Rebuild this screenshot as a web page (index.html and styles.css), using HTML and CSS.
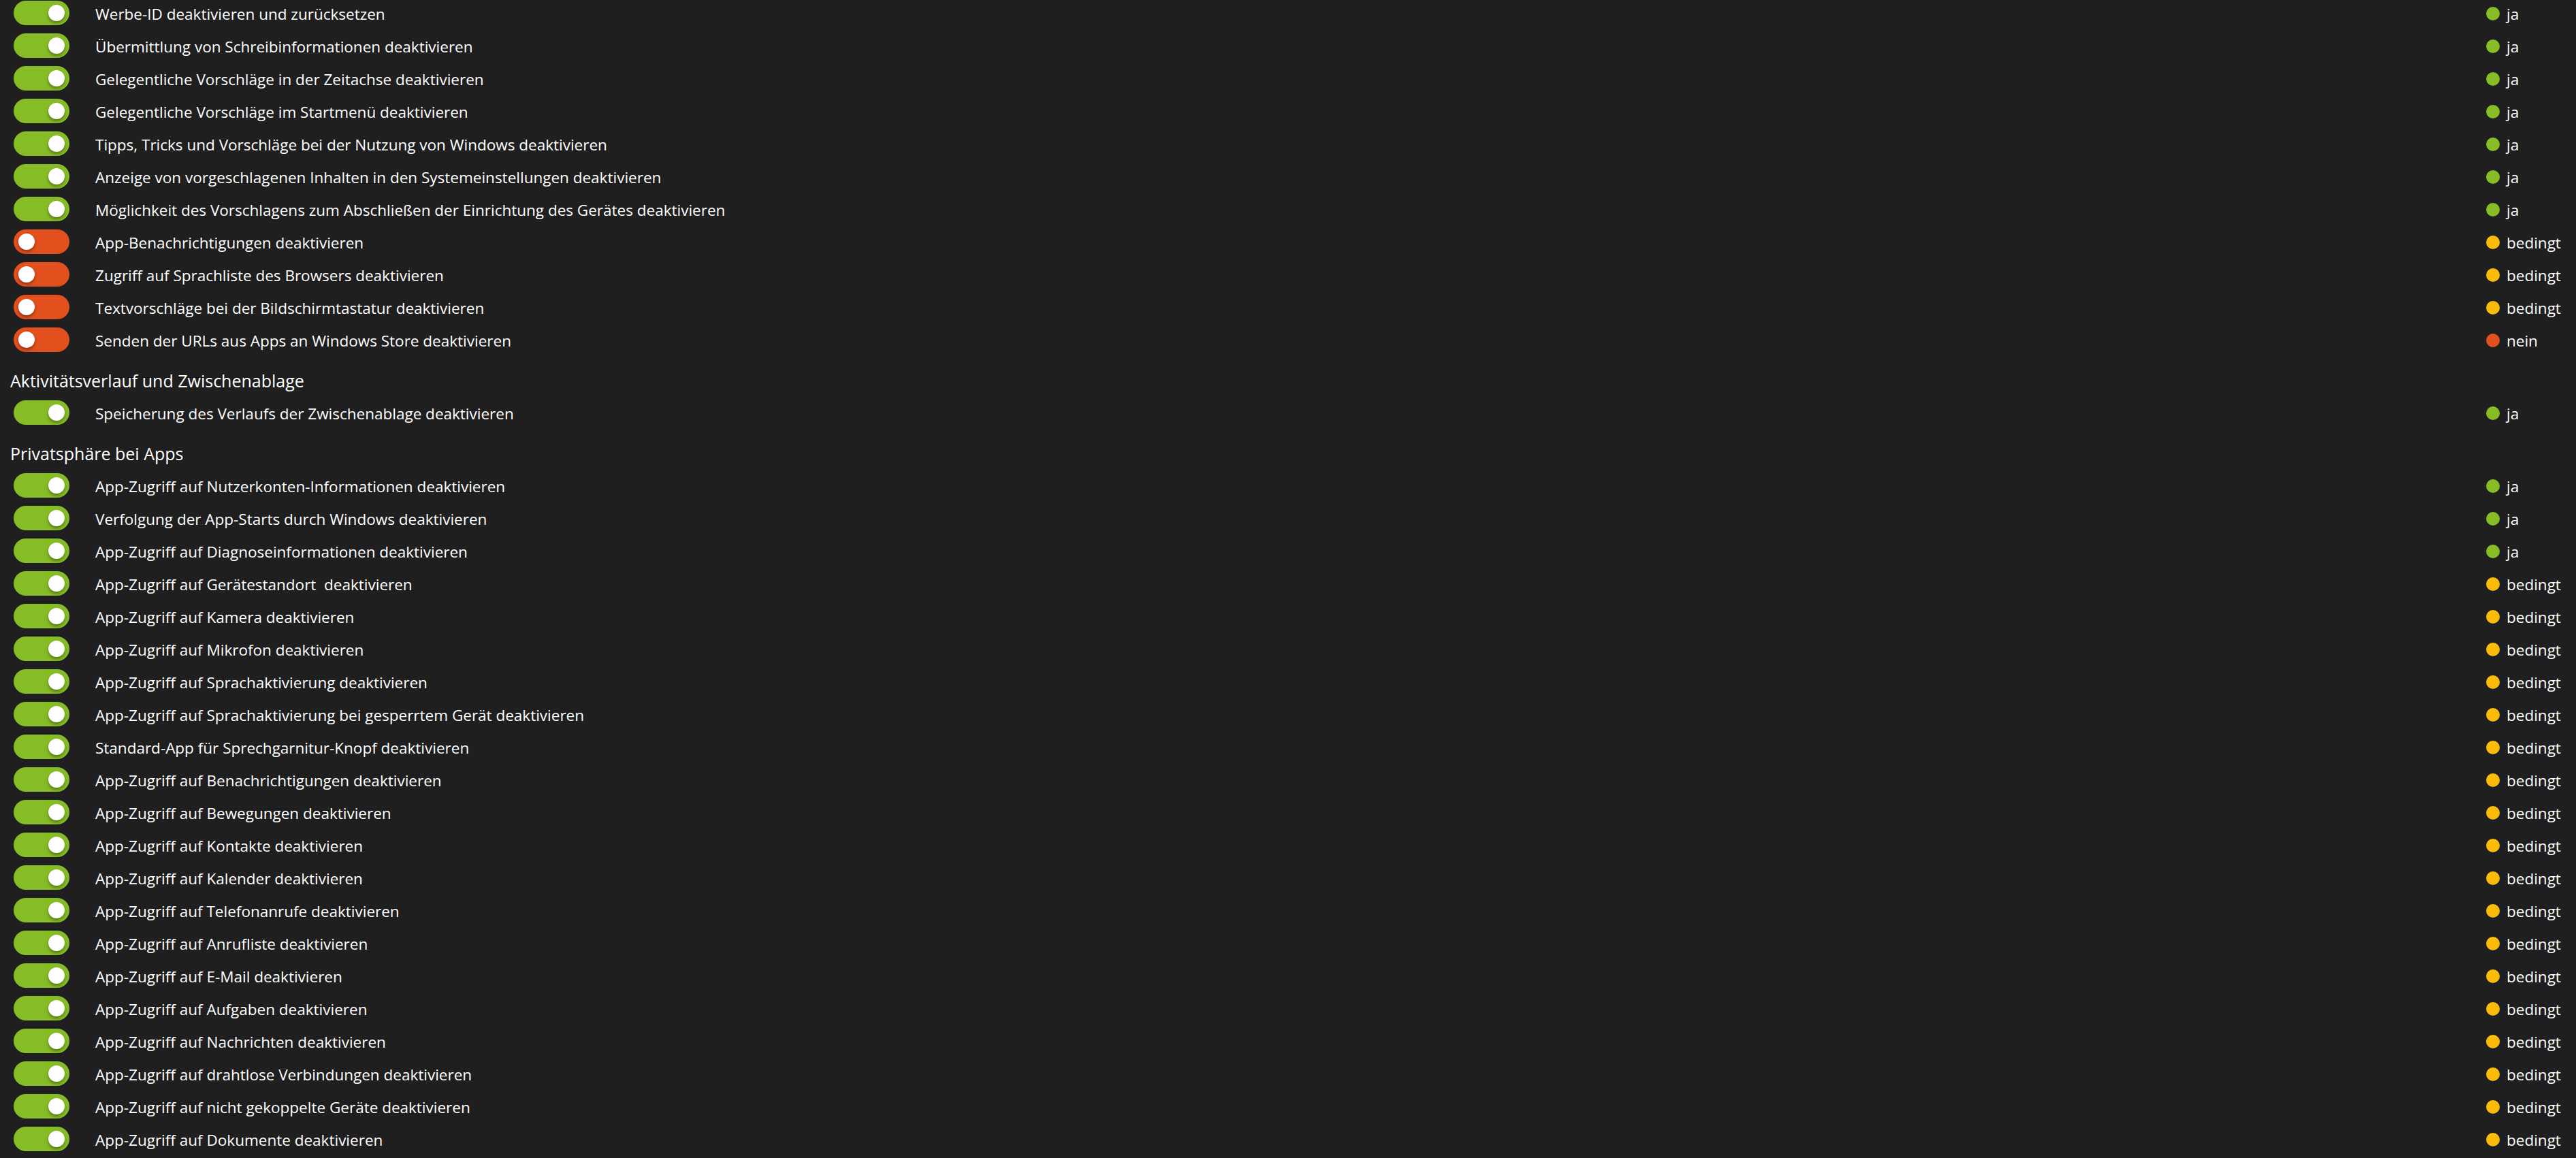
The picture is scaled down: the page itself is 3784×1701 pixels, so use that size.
FILE: index.html
```html
<!DOCTYPE html>
<html lang="de">
<head>
  <meta charset="UTF-8">
  <meta name="viewport" content="width=device-width, initial-scale=1.0">
  <title>Datenschutz-Einstellungen</title>
  <link rel="stylesheet" href="styles.css">
</head>
<body>
  <div class="settings">
    <div class="row"><span class="switch on"><span class="knob"></span></span><span class="label">Werbe-ID deaktivieren und zurücksetzen</span><span class="status"><span class="dot ja"></span>ja</span></div>
    <div class="row"><span class="switch on"><span class="knob"></span></span><span class="label">Übermittlung von Schreibinformationen deaktivieren</span><span class="status"><span class="dot ja"></span>ja</span></div>
    <div class="row"><span class="switch on"><span class="knob"></span></span><span class="label">Gelegentliche Vorschläge in der Zeitachse deaktivieren</span><span class="status"><span class="dot ja"></span>ja</span></div>
    <div class="row"><span class="switch on"><span class="knob"></span></span><span class="label">Gelegentliche Vorschläge im Startmenü deaktivieren</span><span class="status"><span class="dot ja"></span>ja</span></div>
    <div class="row"><span class="switch on"><span class="knob"></span></span><span class="label">Tipps, Tricks und Vorschläge bei der Nutzung von Windows deaktivieren</span><span class="status"><span class="dot ja"></span>ja</span></div>
    <div class="row"><span class="switch on"><span class="knob"></span></span><span class="label">Anzeige von vorgeschlagenen Inhalten in den Systemeinstellungen deaktivieren</span><span class="status"><span class="dot ja"></span>ja</span></div>
    <div class="row"><span class="switch on"><span class="knob"></span></span><span class="label">Möglichkeit des Vorschlagens zum Abschließen der Einrichtung des Gerätes deaktivieren</span><span class="status"><span class="dot ja"></span>ja</span></div>
    <div class="row"><span class="switch off"><span class="knob"></span></span><span class="label">App-Benachrichtigungen deaktivieren</span><span class="status"><span class="dot bedingt"></span>bedingt</span></div>
    <div class="row"><span class="switch off"><span class="knob"></span></span><span class="label">Zugriff auf Sprachliste des Browsers deaktivieren</span><span class="status"><span class="dot bedingt"></span>bedingt</span></div>
    <div class="row"><span class="switch off"><span class="knob"></span></span><span class="label">Textvorschläge bei der Bildschirmtastatur deaktivieren</span><span class="status"><span class="dot bedingt"></span>bedingt</span></div>
    <div class="row"><span class="switch off"><span class="knob"></span></span><span class="label">Senden der URLs aus Apps an Windows Store deaktivieren</span><span class="status"><span class="dot nein"></span>nein</span></div>

    <h3 class="section">Aktivitätsverlauf und Zwischenablage</h3>
    <div class="row"><span class="switch on"><span class="knob"></span></span><span class="label">Speicherung des Verlaufs der Zwischenablage deaktivieren</span><span class="status"><span class="dot ja"></span>ja</span></div>

    <h3 class="section">Privatsphäre bei Apps</h3>
    <div class="row"><span class="switch on"><span class="knob"></span></span><span class="label">App-Zugriff auf Nutzerkonten-Informationen deaktivieren</span><span class="status"><span class="dot ja"></span>ja</span></div>
    <div class="row"><span class="switch on"><span class="knob"></span></span><span class="label">Verfolgung der App-Starts durch Windows deaktivieren</span><span class="status"><span class="dot ja"></span>ja</span></div>
    <div class="row"><span class="switch on"><span class="knob"></span></span><span class="label">App-Zugriff auf Diagnoseinformationen deaktivieren</span><span class="status"><span class="dot ja"></span>ja</span></div>
    <div class="row"><span class="switch on"><span class="knob"></span></span><span class="label">App-Zugriff auf Gerätestandort&nbsp; deaktivieren</span><span class="status"><span class="dot bedingt"></span>bedingt</span></div>
    <div class="row"><span class="switch on"><span class="knob"></span></span><span class="label">App-Zugriff auf Kamera deaktivieren</span><span class="status"><span class="dot bedingt"></span>bedingt</span></div>
    <div class="row"><span class="switch on"><span class="knob"></span></span><span class="label">App-Zugriff auf Mikrofon deaktivieren</span><span class="status"><span class="dot bedingt"></span>bedingt</span></div>
    <div class="row"><span class="switch on"><span class="knob"></span></span><span class="label">App-Zugriff auf Sprachaktivierung deaktivieren</span><span class="status"><span class="dot bedingt"></span>bedingt</span></div>
    <div class="row"><span class="switch on"><span class="knob"></span></span><span class="label">App-Zugriff auf Sprachaktivierung bei gesperrtem Gerät deaktivieren</span><span class="status"><span class="dot bedingt"></span>bedingt</span></div>
    <div class="row"><span class="switch on"><span class="knob"></span></span><span class="label">Standard-App für Sprechgarnitur-Knopf deaktivieren</span><span class="status"><span class="dot bedingt"></span>bedingt</span></div>
    <div class="row"><span class="switch on"><span class="knob"></span></span><span class="label">App-Zugriff auf Benachrichtigungen deaktivieren</span><span class="status"><span class="dot bedingt"></span>bedingt</span></div>
    <div class="row"><span class="switch on"><span class="knob"></span></span><span class="label">App-Zugriff auf Bewegungen deaktivieren</span><span class="status"><span class="dot bedingt"></span>bedingt</span></div>
    <div class="row"><span class="switch on"><span class="knob"></span></span><span class="label">App-Zugriff auf Kontakte deaktivieren</span><span class="status"><span class="dot bedingt"></span>bedingt</span></div>
    <div class="row"><span class="switch on"><span class="knob"></span></span><span class="label">App-Zugriff auf Kalender deaktivieren</span><span class="status"><span class="dot bedingt"></span>bedingt</span></div>
    <div class="row"><span class="switch on"><span class="knob"></span></span><span class="label">App-Zugriff auf Telefonanrufe deaktivieren</span><span class="status"><span class="dot bedingt"></span>bedingt</span></div>
    <div class="row"><span class="switch on"><span class="knob"></span></span><span class="label">App-Zugriff auf Anrufliste deaktivieren</span><span class="status"><span class="dot bedingt"></span>bedingt</span></div>
    <div class="row"><span class="switch on"><span class="knob"></span></span><span class="label">App-Zugriff auf E-Mail deaktivieren</span><span class="status"><span class="dot bedingt"></span>bedingt</span></div>
    <div class="row"><span class="switch on"><span class="knob"></span></span><span class="label">App-Zugriff auf Aufgaben deaktivieren</span><span class="status"><span class="dot bedingt"></span>bedingt</span></div>
    <div class="row"><span class="switch on"><span class="knob"></span></span><span class="label">App-Zugriff auf Nachrichten deaktivieren</span><span class="status"><span class="dot bedingt"></span>bedingt</span></div>
    <div class="row"><span class="switch on"><span class="knob"></span></span><span class="label">App-Zugriff auf drahtlose Verbindungen deaktivieren</span><span class="status"><span class="dot bedingt"></span>bedingt</span></div>
    <div class="row"><span class="switch on"><span class="knob"></span></span><span class="label">App-Zugriff auf nicht gekoppelte Geräte deaktivieren</span><span class="status"><span class="dot bedingt"></span>bedingt</span></div>
    <div class="row"><span class="switch on"><span class="knob"></span></span><span class="label">App-Zugriff auf Dokumente deaktivieren</span><span class="status"><span class="dot bedingt"></span>bedingt</span></div>
  </div>
</body>
</html>
```

FILE: styles.css
```css
body {
  margin: 0;
  background-color: #1f1f1f;
  color: #ffffff;
  font-family: 'Open Sans', 'Noto Sans', sans-serif;
  font-size: 22.5px;
  overflow: hidden;
}

.settings {
  margin-top: -5px; /* list is scrolled a little */
}

.row {
  display: grid;
  grid-template-columns: 82px 1fr 132px;
  column-gap: 38px;
  align-items: center;
  height: 48px;
  padding-left: 20px;
}

.section {
  height: 59px;
  margin: 0;
  padding: 20px 0 0 15px;
  box-sizing: border-box;
  font-size: 25px;
  font-weight: normal;
  line-height: 32px;
}

.switch {
  display: flex;
  align-items: center;
  width: 82px;
  height: 36px;
  padding: 0 7px;
  box-sizing: border-box;
  border-radius: 18px;
}

.switch.on {
  background-color: #86bc25;
  justify-content: flex-end;
}

.switch.off {
  background-color: #e1501d;
  justify-content: flex-start;
}

.knob {
  width: 24px;
  height: 24px;
  border-radius: 50%;
  background-color: #ffffff;
  box-shadow: 0 3px 4px rgba(0, 0, 0, 0.35);
}

.label {
  padding-top: 3px;
  white-space: nowrap;
}

.status {
  display: flex;
  align-items: center;
  gap: 10px;
  padding-top: 2px;
}

.dot {
  width: 20px;
  height: 20px;
  border-radius: 50%;
}

.dot.ja {
  background-color: #86bc25;
}

.dot.bedingt {
  background-color: #fbbc09;
}

.dot.nein {
  background-color: #e1501d;
}
```
